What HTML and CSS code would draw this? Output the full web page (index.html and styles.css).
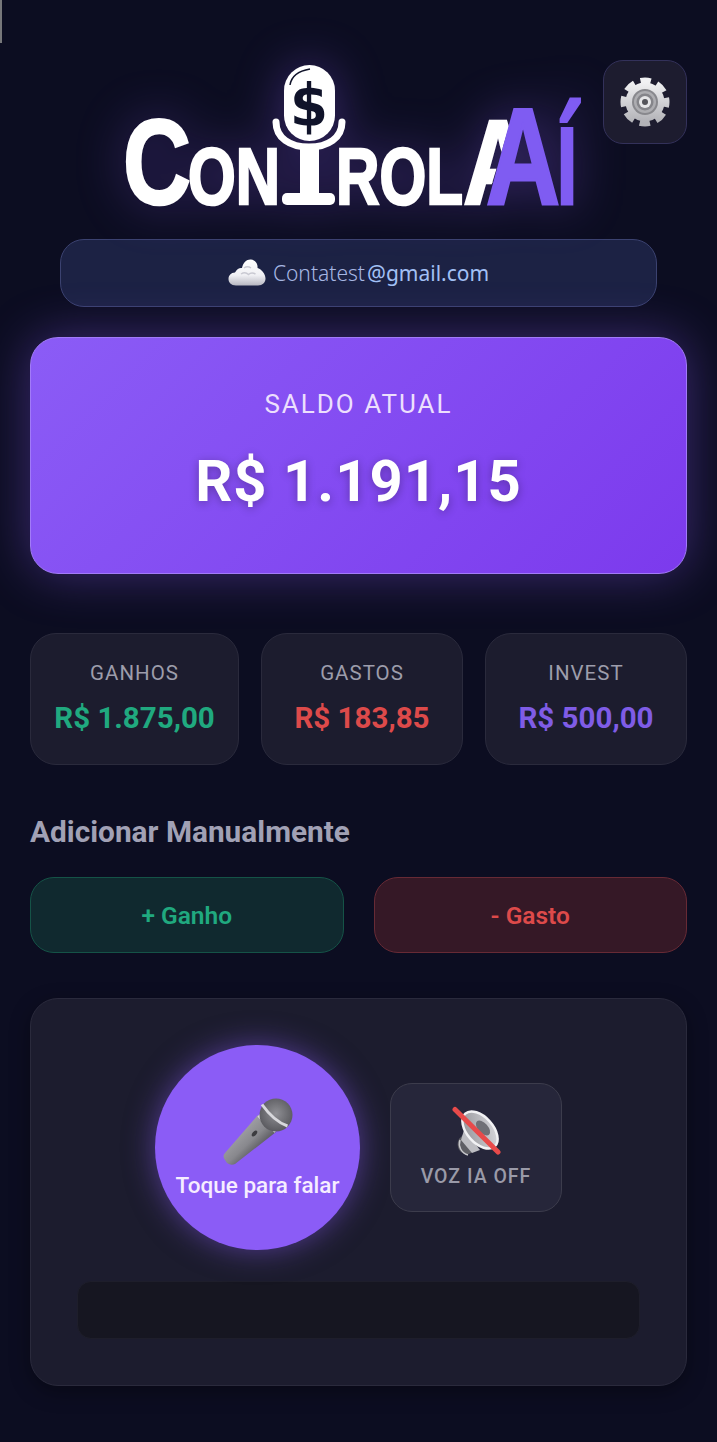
FILE: index.html
```html
<!DOCTYPE html>
<html lang="pt-BR">
<head>
  <meta charset="utf-8">
  <title>ControlaAí</title>
  <link rel="stylesheet" href="styles.css">
</head>
<body>
  <div class="edge-mark"></div>

  <main class="app">
    <!-- Logo and settings -->
    <header class="top">
      <svg class="logo" viewBox="120 60 460 150" role="img" aria-label="ControlaAí">
        <defs>
          <clipPath id="backA">
            <polygon points="440,100 515,100 483,207 440,207"/>
          </clipPath>
        </defs>
        <g class="logo-white">
          <text x="121" y="204" font-size="120" textLength="68" lengthAdjust="spacingAndGlyphs">C</text>
          <text x="186" y="204" font-size="80" textLength="92" lengthAdjust="spacingAndGlyphs">ON</text>
          <text x="334" y="204" font-size="80" textLength="127" lengthAdjust="spacingAndGlyphs">ROL</text>
          <g clip-path="url(#backA)">
            <text x="461" y="204" font-size="120" textLength="70" lengthAdjust="spacingAndGlyphs">A</text>
          </g>
        </g>
        <!-- mic that doubles as the T -->
        <rect x="282" y="65" width="51" height="76" rx="25.500" fill="#fff"/>
        <path d="M288 85 Q290 72 308 69" fill="none" stroke="#10132a" stroke-width="1.500"/>
        <text class="logo-dollar" x="288" y="126" font-size="58" textLength="38" lengthAdjust="spacingAndGlyphs">$</text>
        <path d="M274 122 C274 138 288 147 307 147 C326 147 340 138 340 122" fill="none" stroke="#fff" stroke-width="7" stroke-linecap="round"/>
        <rect x="298" y="148" width="19" height="50" fill="#fff"/>
        <rect x="280" y="193" width="53" height="12" rx="5" fill="#fff"/>
        <g class="logo-purple">
          <text x="484" y="204" font-size="137" textLength="74" lengthAdjust="spacingAndGlyphs">A</text>
          <text x="554" y="204" font-size="142" textLength="22" lengthAdjust="spacingAndGlyphs">í</text>
        </g>
      </svg>
      <button class="settings" aria-label="Configurações">
        <svg width="52" height="52" viewBox="0 0 52 52">
          <defs>
            <linearGradient id="gearBody" x1="0" y1="0" x2="0" y2="1">
              <stop offset="0" stop-color="#f1f1f3"/>
              <stop offset="1" stop-color="#b2b2b7"/>
            </linearGradient>
          </defs>
          <circle cx="26" cy="26" r="20.500" fill="none" stroke="url(#gearBody)" stroke-width="8" stroke-dasharray="10 6.100" stroke-dashoffset="5"/>
          <circle cx="26" cy="26" r="19.500" fill="url(#gearBody)"/>
          <circle cx="26" cy="26" r="13" fill="#88888d"/>
          <circle cx="26" cy="26" r="11" fill="#adadb1"/>
          <circle cx="26" cy="26" r="8.500" fill="#85858a"/>
          <circle cx="26" cy="26" r="6" fill="#e6e6e8"/>
          <circle cx="26" cy="26" r="3" fill="#54545a"/>
        </svg>
      </button>
    </header>

    <div class="account">
      <svg class="cloud" width="38" height="30" viewBox="0 0 38 30">
        <defs>
          <linearGradient id="cloudFill" gradientUnits="userSpaceOnUse" x1="0" y1="2" x2="0" y2="29">
            <stop offset="0" stop-color="#ffffff"/>
            <stop offset=".6" stop-color="#f0f0f4"/>
            <stop offset="1" stop-color="#b4b4be"/>
          </linearGradient>
        </defs>
        <path fill="url(#cloudFill)" d="M8 28.500C3 28.500 .5 25.500 .5 22C.5 18.500 3 15.500 7 15.500C9 11.500 12 10.500 14 11C15 5.500 19 2 23 2.500C27.500 3 30 7 29.500 11C33 12 37.500 16.500 37.500 21.500C37.500 25.500 34.500 28.500 30 28.500Z"/>
        <path d="M13 17C16 15 18.500 15.500 20.500 17.500C22.500 15.500 25 15.500 27.500 17M16 11C18 9.500 21 9.500 23 11" fill="none" stroke="#c9c9d2" stroke-width="1.500"/>
      </svg>
      <span class="account-name">Contatest</span><span class="account-mail">@gmail.com</span>
    </div>

    <section class="balance">
      <div class="balance-label">SALDO ATUAL</div>
      <div class="balance-value">R$ 1.191,15</div>
    </section>

    <section class="stats">
      <div class="stat stat-wide">
        <div class="stat-label">GANHOS</div>
        <div class="stat-value green">R$ 1.875,00</div>
      </div>
      <div class="stat">
        <div class="stat-label">GASTOS</div>
        <div class="stat-value red">R$ 183,85</div>
      </div>
      <div class="stat">
        <div class="stat-label">INVEST</div>
        <div class="stat-value purple">R$ 500,00</div>
      </div>
    </section>

    <h2 class="section-title">Adicionar Manualmente</h2>
    <div class="manual">
      <button class="manual-btn gain">+ Ganho</button>
      <button class="manual-btn loss">- Gasto</button>
    </div>

    <!-- Voice panel -->
    <section class="voice">
      <div class="voice-row">
        <button class="talk">
          <svg class="talk-icon" width="74" height="72" viewBox="0 0 74 72">
            <defs>
              <linearGradient id="handle" x1=".25" y1=".25" x2=".7" y2=".7">
                <stop offset="0" stop-color="#a6a6aa"/>
                <stop offset=".6" stop-color="#88888d"/>
                <stop offset="1" stop-color="#55555b"/>
              </linearGradient>
              <radialGradient id="head" cx=".5" cy=".45" r=".65">
                <stop offset="0" stop-color="#8f8f94"/>
                <stop offset="1" stop-color="#505055"/>
              </radialGradient>
            </defs>
            <path fill="url(#handle)" d="M38 20L56 37L15 69Q11 71 7 68L5 65Q2 61 5 58Z"/>
            <ellipse cx="34.500" cy="38.500" rx="2" ry="3.500" transform="rotate(40 34.500 38.500)" fill="#3c3c40"/>
            <path d="M39 20L56 36" stroke="#d8d8dc" stroke-width="4.500"/>
            <circle cx="56" cy="20" r="16.500" fill="url(#head)"/>
            <path d="M42 9.500C48 18 56 27 67.500 31" fill="none" stroke="#d8d8dc" stroke-width="3"/>
          </svg>
          <span class="talk-text">Toque para falar</span>
        </button>
        <button class="voice-toggle">
          <svg class="speaker" width="52" height="52" viewBox="0 0 52 52">
            <defs>
              <linearGradient id="cone" x1="0" y1="0" x2="1" y2="1">
                <stop offset="0" stop-color="#8d8d92"/>
                <stop offset="1" stop-color="#e0e0e4"/>
              </linearGradient>
            </defs>
            <path d="M12 30A8 9 0 1 0 21 47L30 40L17 24Z" fill="#5e5e64"/>
            <path d="M10 34C8 40 11 47 18 49" fill="none" stroke="#c8c8cc" stroke-width="1.500"/>
            <path d="M14 24L30 44L22 47L11 34Z" fill="#bdbdc2"/>
            <ellipse cx="30" cy="24" rx="13" ry="22" transform="rotate(-42 30 24)" fill="url(#cone)" stroke="#f2f2f4" stroke-width="2.500"/>
            <ellipse cx="33" cy="22" rx="5" ry="9" transform="rotate(-42 33 22)" fill="#707076"/>
            <path d="M5 3.500L48 46" stroke="#e84a4a" stroke-width="5" stroke-linecap="round"/>
          </svg>
          <span class="voice-toggle-text">VOZ IA OFF</span>
        </button>
      </div>
      <div class="transcript"></div>
    </section>
  </main>
</body>
</html>
```

FILE: styles.css
```css
* {
  box-sizing: border-box;
}

body {
  margin: 0;
  min-height: 1442px;
  background: #0c0d21;
  color: #fff;
  font-family: Roboto, "Liberation Sans", sans-serif;
}

button {
  font-family: inherit;
  cursor: pointer;
}

.edge-mark {
  position: absolute;
  top: 0;
  left: 0;
  width: 2px;
  height: 43px;
  background: #77777a;
}

.app {
  padding: 60px 30px 56px;
}

/* header */
.top {
  position: relative;
  display: flex;
  justify-content: center;
  height: 150px;
  margin-bottom: 29px;
}

.logo {
  width: 460px;
  height: 150px;
  margin-left: -13px;
  overflow: visible;
  filter: drop-shadow(0 0 24px rgba(139, 92, 246, 0.35));
}

.logo text {
  font-family: "Liberation Sans Narrow", "Liberation Sans", sans-serif;
  font-weight: 700;
}

.logo-white {
  fill: #fff;
  stroke: #fff;
  stroke-width: 2.5;
}

.logo-purple {
  fill: #7f5cf2;
  stroke: #7f5cf2;
  stroke-width: 3;
}

.logo .logo-dollar {
  font-family: "DejaVu Sans", sans-serif;
  fill: #10132a;
}

.settings {
  position: absolute;
  top: 0;
  right: 0;
  width: 84px;
  height: 84px;
  padding: 0;
  display: flex;
  align-items: center;
  justify-content: center;
  background: #1d1c2f;
  border: 1px solid #33315a;
  border-radius: 20px;
}

/* account pill */
.account {
  display: flex;
  align-items: center;
  justify-content: center;
  width: 597px;
  height: 68px;
  margin: 0 auto 30px;
  background: #1c2244;
  border: 1px solid #3b4270;
  border-radius: 24px;
  font-family: "Noto Sans", "Open Sans", sans-serif;
  font-size: 21px;
}

.cloud {
  margin-right: 7px;
  margin-top: -3px;
}

.account-name {
  color: #a6b6e3;
  font-weight: 300;
}

.account-mail {
  color: #a2c0f5;
  margin-left: 2px;
}

/* balance card */
.balance {
  height: 237px;
  margin-bottom: 59px;
  padding-top: 50px;
  text-align: center;
  background: linear-gradient(135deg, #8b5cf6, #7c3aed);
  border: 1px solid #a27bf8;
  border-radius: 28px;
  box-shadow: 0 0 50px rgba(139, 92, 246, 0.38);
}

.balance-label {
  font-size: 26px;
  line-height: 32px;
  letter-spacing: 2px;
  color: #ecdffd;
}

.balance-value {
  margin-top: 27px;
  font-size: 58px;
  line-height: 68px;
  font-weight: 700;
  letter-spacing: 1px;
  text-shadow: 0 2px 10px rgba(0, 0, 0, 0.3);
}

/* summary cards */
.stats {
  display: grid;
  grid-template-columns: 209px 1fr 1fr;
  gap: 22px;
  margin-bottom: 50px;
}

.stat {
  height: 132px;
  padding-top: 26px;
  text-align: center;
  background: #1c1c2e;
  border: 1px solid #2a2a3c;
  border-radius: 26px;
}

.stat-label {
  font-size: 20.5px;
  line-height: 26px;
  letter-spacing: 1px;
  color: #9d9dab;
}

.stat-value {
  margin-top: 13px;
  font-size: 29.5px;
  line-height: 38px;
  font-weight: 700;
}

.green {
  color: #20a97f;
}

.red {
  color: #dd4a4a;
}

.purple {
  color: #7f5ce6;
}

/* manual entry */
.section-title {
  margin: 0 0 28px;
  font-size: 29.8px;
  line-height: 34px;
  font-weight: 700;
  color: #a1a1b5;
}

.manual {
  display: grid;
  grid-template-columns: 1fr 1fr;
  gap: 30px;
  margin-bottom: 45px;
}

.manual-btn {
  height: 76px;
  font-size: 24.5px;
  font-weight: 600;
  border-radius: 24px;
}

.gain {
  color: #20a97f;
  background: #10292f;
  border: 1px solid #155347;
}

.loss {
  color: #dd4a4a;
  background: #351826;
  border: 1px solid #672a35;
}

/* voice panel */
.voice {
  height: 388px;
  padding: 46px 46px 0;
  background: #1c1c2e;
  border: 1px solid #2a2a3c;
  border-radius: 28px;
  box-shadow: 0 6px 20px rgba(0, 0, 0, 0.35);
}

.voice-row {
  display: flex;
  align-items: center;
  gap: 30px;
  margin-left: 78px;
  margin-bottom: 31px;
}

.talk {
  width: 205px;
  height: 205px;
  padding: 50px 0 0;
  display: flex;
  flex-direction: column;
  align-items: center;
  background: #8b5cf6;
  border: 0;
  border-radius: 50%;
  box-shadow: 0 0 30px rgba(139, 92, 246, 0.5);
}

.talk-icon {
  margin-left: -2px;
}

.talk-text {
  margin-top: 4px;
  font-size: 22.5px;
  line-height: 28px;
  font-weight: 500;
  color: #f6edff;
}

.voice-toggle {
  width: 172px;
  height: 129px;
  padding: 22px 0 0;
  display: flex;
  flex-direction: column;
  align-items: center;
  background: #26263a;
  border: 1px solid #3c3c4c;
  border-radius: 22px;
}

.voice-toggle-text {
  margin-top: 6px;
  font-size: 19.5px;
  line-height: 26px;
  font-weight: 500;
  letter-spacing: 1px;
  color: #9a9aa8;
}

.transcript {
  height: 58px;
  background: #161621;
  border: 1px solid #1e1e2b;
  border-radius: 14px;
}
```
